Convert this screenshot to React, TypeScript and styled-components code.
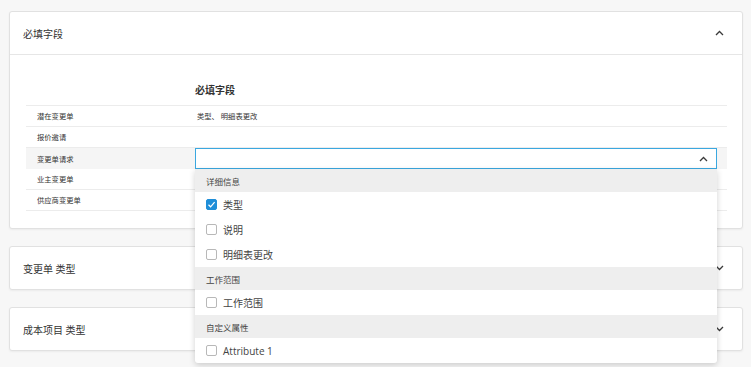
import styled, { createGlobalStyle } from "styled-components";

const GlobalStyle = createGlobalStyle`
  html, body {
    margin: 0;
    padding: 0;
    background: #f7f7f7;
  }
  body {
    font-family: "Open Sans", "Noto Sans CJK SC", sans-serif;
    color: #333;
  }
  * { box-sizing: border-box; }
`;

const rows = [
  { label: "潜在变更单", value: "类型、 明细表更改" },
  { label: "报价邀请", value: "" },
  { label: "变更单请求", value: "", select: true },
  { label: "业主变更单", value: "" },
  { label: "供应商变更单", value: "" },
];

const groups = [
  { title: "详细信息", items: [{ name: "类型", checked: true }, { name: "说明" }, { name: "明细表更改" }] },
  { title: "工作范围", items: [{ name: "工作范围" }] },
  { title: "自定义属性", items: [{ name: "Attribute 1" }] },
];

const Chevron = ({ up }: { up?: boolean }) => (
  <svg width="9" height="6" viewBox="0 0 9 6">
    <path
      d={up ? "M1 5 L4.5 1.5 L8 5" : "M1 1 L4.5 4.5 L8 1"}
      fill="none"
      stroke="#3a3a3a"
      strokeWidth="1.3"
    />
  </svg>
);

const CheckIcon = () => (
  <svg width="9" height="9" viewBox="0 0 9 9">
    <path d="M1.5 4.8 L3.6 6.8 L7.6 2.2" fill="none" stroke="#fff" strokeWidth="1.2" />
  </svg>
);

const App = () => {
  return (
    <>
      <GlobalStyle />
      <Page>
        <Card>
          <CardHeader>
            <span>必填字段</span>
            <Chevron up />
          </CardHeader>
          <CardBody>
            <TableHeading>
              <span />
              <span>必填字段</span>
            </TableHeading>
            <Table>
              {rows.map((r) => (
                <Row key={r.label} $active={!!r.select}>
                  <Label>{r.label}</Label>
                  {r.select ? (
                    <SelectCell>
                      <SelectBox>
                        <Chevron up />
                      </SelectBox>
                      <Dropdown>
                        {groups.map((g) => (
                          <div key={g.title}>
                            <GroupTitle>{g.title}</GroupTitle>
                            {g.items.map((it) => (
                              <Option key={it.name}>
                                <Box $checked={!!it.checked}>{it.checked && <CheckIcon />}</Box>
                                <span>{it.name}</span>
                              </Option>
                            ))}
                          </div>
                        ))}
                      </Dropdown>
                    </SelectCell>
                  ) : (
                    <Value>{r.value}</Value>
                  )}
                </Row>
              ))}
            </Table>
          </CardBody>
        </Card>
        <Card>
          <CardHeader>
            <span>变更单 类型</span>
            <Chevron />
          </CardHeader>
        </Card>
        <Card>
          <CardHeader>
            <span>成本项目 类型</span>
            <Chevron />
          </CardHeader>
        </Card>
      </Page>
    </>
  );
};

export default App;

const Page = styled.div`
  display: flex;
  flex-direction: column;
  gap: 17px;
  padding: 11px 8px 0 9px;
  width: 751px;
  height: 367px;
  overflow: hidden;
`;

const Card = styled.div`
  background: #fff;
  border: 1px solid #e1e1e1;
  border-radius: 3px;
  box-shadow: 0 1px 2px rgba(0, 0, 0, 0.05);
`;

const CardHeader = styled.div`
  height: 42px;
  display: flex;
  align-items: center;
  justify-content: space-between;
  padding: 0 18px 0 13px;
  font-size: 10px;
  color: #333;
  & + * {
    border-top: 1px solid #e6e6e6;
  }
`;

const CardBody = styled.div`
  padding: 23px 15px 17px 16px;
`;

const TableHeading = styled.div`
  display: grid;
  grid-template-columns: 169px 1fr;
  height: 22px;
  align-items: center;
  margin-bottom: 5px;
  font-size: 10px;
  font-weight: 700;
  color: #333;
`;

const Table = styled.div`
  border-top: 1px solid #ececec;
`;

const Row = styled.div<{ $active: boolean }>`
  display: grid;
  grid-template-columns: 169px 1fr;
  height: 21px;
  align-items: center;
  border-bottom: ${(p) => (p.$active ? "none" : "1px solid #ececec")};
  background: ${(p) => (p.$active ? "#f5f5f5" : "transparent")};
  font-size: 7.3px;
  color: #333;
`;

const Label = styled.span`
  padding-left: 11px;
`;

const Value = styled.span`
  padding-left: 2px;
`;

const SelectCell = styled.div`
  position: relative;
  height: 100%;
  margin-right: 10px;
`;

const SelectBox = styled.div`
  height: 100%;
  background: #fff;
  border: 1px solid #3ba8e0;
  display: flex;
  align-items: center;
  justify-content: flex-end;
  padding-right: 8px;
`;

const Dropdown = styled.div`
  position: absolute;
  top: 100%;
  left: 0;
  right: 0;
  z-index: 5;
  background: #fff;
  border-radius: 0 0 3px 3px;
  box-shadow: 0 2px 6px rgba(0, 0, 0, 0.18);
  overflow: hidden;
`;

const GroupTitle = styled.div`
  height: 23px;
  display: flex;
  align-items: center;
  padding-left: 11px;
  background: #eeeeee;
  font-size: 8.5px;
  color: #444;
`;

const Option = styled.div`
  height: 25px;
  display: flex;
  align-items: center;
  gap: 6px;
  padding-left: 11px;
  font-size: 10px;
  color: #444;
`;

const Box = styled.span<{ $checked: boolean }>`
  width: 11px;
  height: 11px;
  border-radius: 2px;
  display: flex;
  align-items: center;
  justify-content: center;
  border: 1px solid ${(p) => (p.$checked ? "#1f8ed8" : "#b8b8b8")};
  background: ${(p) => (p.$checked ? "#1f8ed8" : "#fff")};
`;
